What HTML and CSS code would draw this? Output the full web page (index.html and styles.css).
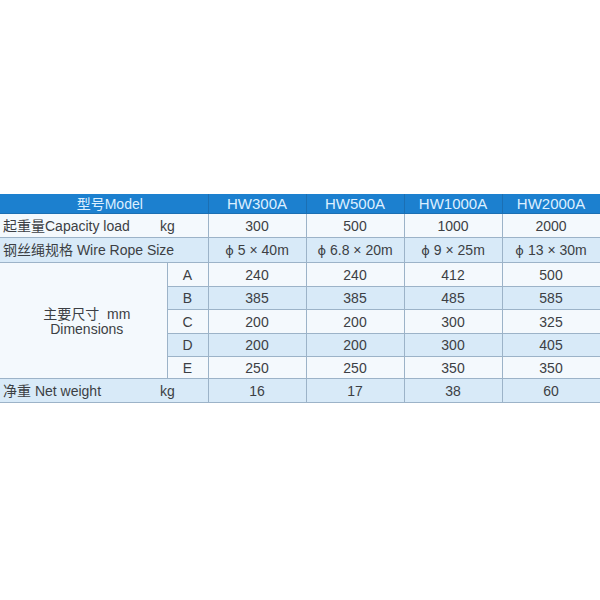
FILE: index.html
```html
<!DOCTYPE html>
<html>
<head>
<meta charset="utf-8">
<link rel="stylesheet" href="styles.css">
</head>
<body>
<div class="wrap">
<table class="spec">
  <colgroup>
    <col class="c-label"><col class="c-letter"><col class="c-val"><col class="c-val"><col class="c-val"><col class="c-val">
  </colgroup>
  <tr class="head">
    <th colspan="2" class="model">型号Model</th>
    <th class="hw">HW300A</th><th class="hw">HW500A</th><th class="hw">HW1000A</th><th class="hw">HW2000A</th>
  </tr>
  <tr class="r-cap light">
    <td colspan="2" class="lbl"><span>起重量Capacity load</span><span class="unit">kg</span></td>
    <td>300</td><td>500</td><td>1000</td><td>2000</td>
  </tr>
  <tr class="r-wire blue">
    <td colspan="2" class="lbl"><span>钢丝绳规格 Wire Rope Size</span></td>
    <td><span class="phi">ϕ</span>5 × 40m</td><td><span class="phi">ϕ</span>6.8 × 20m</td><td><span class="phi">ϕ</span>9 × 25m</td><td><span class="phi">ϕ</span>13 × 30m</td>
  </tr>
  <tr class="r-a light">
    <td rowspan="5" class="dim">主要尺寸&nbsp; mm<br>Dimensions</td>
    <td>A</td><td>240</td><td>240</td><td>412</td><td>500</td>
  </tr>
  <tr class="r-b blue"><td>B</td><td>385</td><td>385</td><td>485</td><td>585</td></tr>
  <tr class="r-c light"><td>C</td><td>200</td><td>200</td><td>300</td><td>325</td></tr>
  <tr class="r-d blue"><td>D</td><td>200</td><td>200</td><td>300</td><td>405</td></tr>
  <tr class="r-e light"><td>E</td><td>250</td><td>250</td><td>350</td><td>350</td></tr>
  <tr class="r-net blue">
    <td colspan="2" class="lbl"><span>净重 Net weight</span><span class="unit">kg</span></td>
    <td>16</td><td>17</td><td>38</td><td>60</td>
  </tr>
</table>
</div>
</body>
</html>
```
FILE: styles.css
```css
html, body {
  margin: 0;
  padding: 0;
  background: #ffffff;
}
.wrap {
  padding-top: 194px;
  width: 600px;
}
.spec {
  border-collapse: collapse;
  width: 599px;
  table-layout: fixed;
  font-family: "Liberation Sans", Arial, "Noto Sans CJK SC", sans-serif;
  font-size: 14px;
  color: #3c3f44;
  box-shadow: 0 1px 1px rgba(120,140,160,0.35);
}
.c-label { width: 167px; }
.c-letter { width: 41px; }
.c-val { width: 98px; }
.spec td, .spec th {
  border: 1px solid #9cb3c8;
  padding: 0;
  text-align: center;
  vertical-align: middle;
  line-height: 14px;
  overflow: hidden;
  white-space: nowrap;
}
.head th {
  background: #1c80cf;
  color: #dcefff;
  font-weight: normal;
  height: 19px;
  border-color: #1b6fb3;
  border-top: none;
}
.head th.model { padding-left: 12px; }
.head th.hw { font-size: 15px; }
.light td { background: #f4f9fd; }
.blue td { background: #d8eaf8; }
.spec td.dim {
  background: #f4f9fd;
  line-height: 15px;
  padding: 2px 0 0 7px;
}
.spec td.lbl {
  text-align: left;
  padding-left: 3px;
}
.lbl { position: relative; }
.unit {
  position: absolute;
  left: 160px;
}
.phi {
  font-family: "DejaVu Sans", sans-serif;
  font-size: 13px;
  margin-right: 4px;
}
.r-cap td { height: 23px; }
.r-wire td { height: 24px; }
.r-a td { height: 23px; }
.r-b td { height: 22px; }
.r-c td { height: 23px; }
.r-d td { height: 22px; }
.r-e td { height: 21px; }
.r-net td { height: 23px; }
.spec td:first-child { border-left: none; }
.spec th:first-child { border-left: none; }
```
